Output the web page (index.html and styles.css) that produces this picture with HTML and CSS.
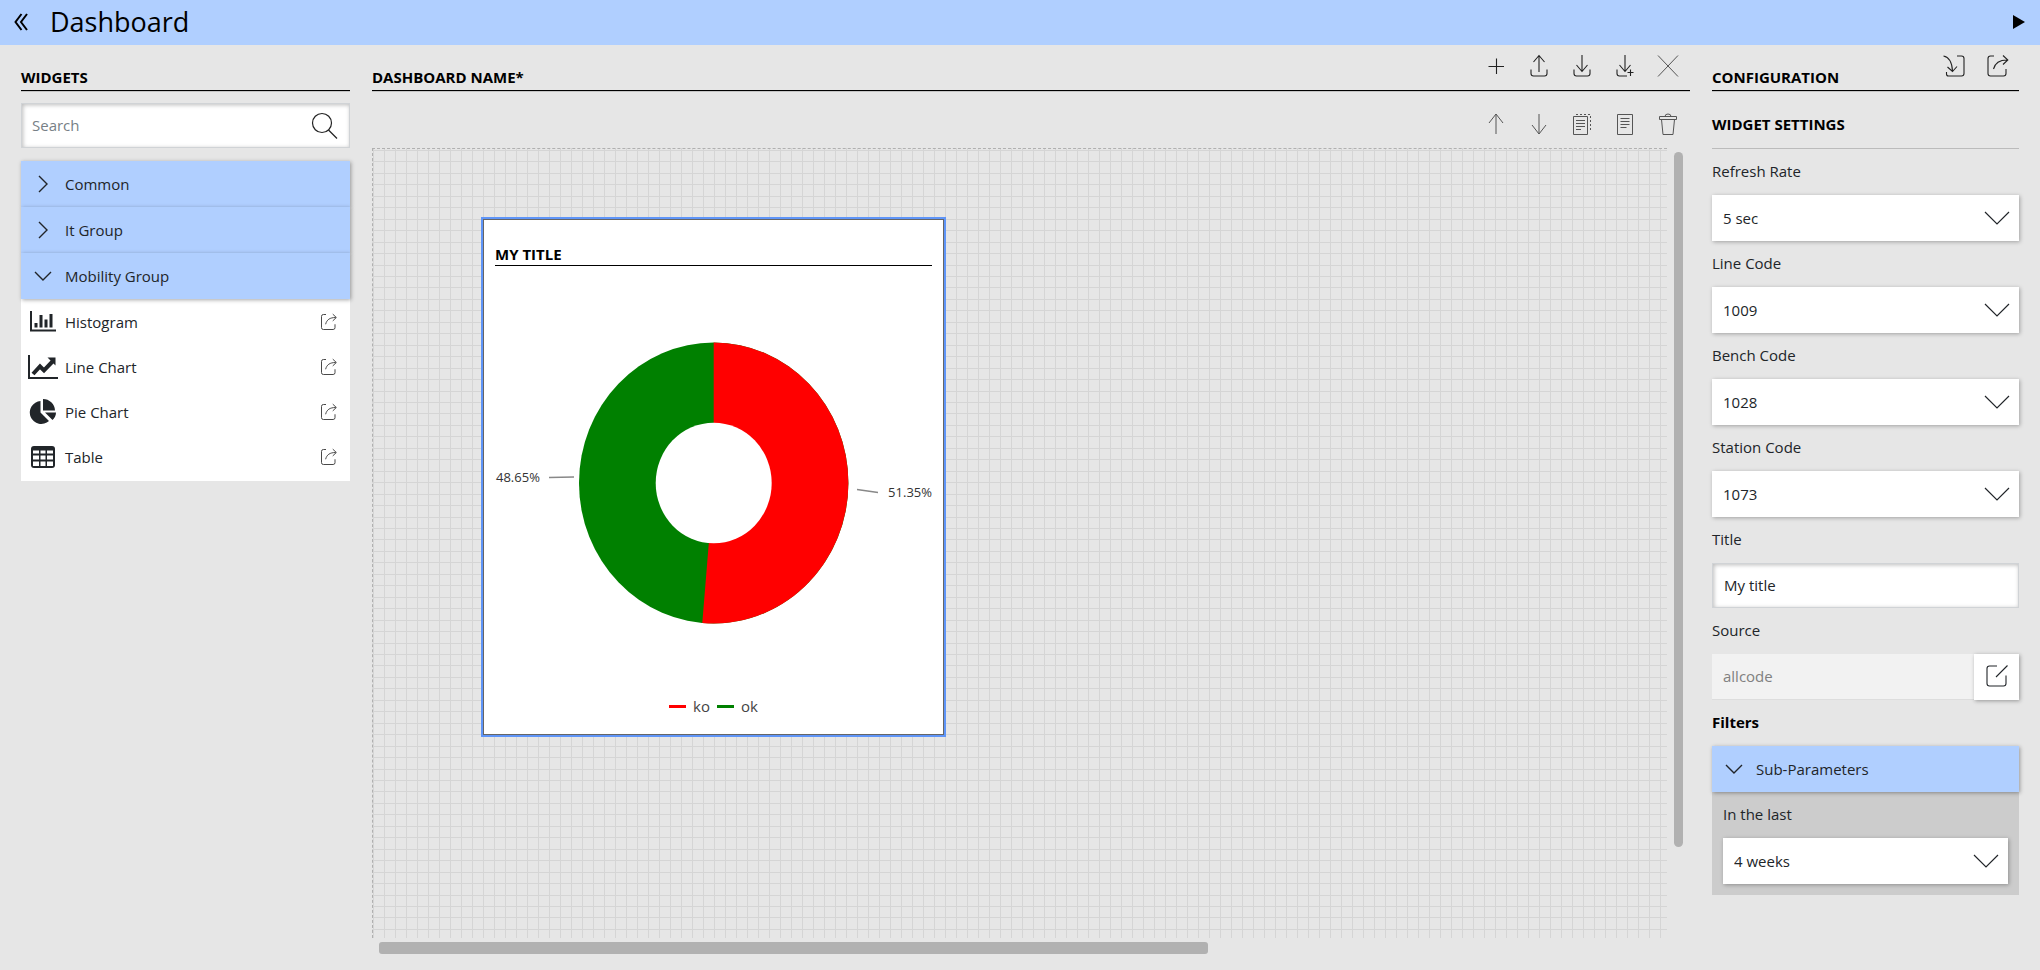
FILE: index.html
```html
<!DOCTYPE html>
<html lang="en">
<head>
<meta charset="utf-8">
<meta name="viewport" content="width=device-width, initial-scale=1">
<title>Dashboard</title>
<link rel="stylesheet" href="styles.css">
</head>
<body>
<svg class="sprite" aria-hidden="true">
  <symbol id="i-right" viewBox="0 0 30 24"><path d="M11 4l8 8-8 8"/></symbol>
  <symbol id="i-down" viewBox="0 0 30 24"><path d="M7 8l8 8 8-8"/></symbol>
  <symbol id="i-select" viewBox="0 0 26 14"><path d="M1 1l12 12L25 1"/></symbol>
  <symbol id="i-share" viewBox="0 0 24 24"><path d="M8 2H4.500Q2 2 2 4.500V19.500Q2 22 4.500 22H17.500Q20 22 20 19.500V15M7.500 15C9 9 13 6 21 6M17 1.500L21.800 6 17 10.500"/></symbol>
  <symbol id="i-import" viewBox="0 0 24 24"><path d="M15 2H19.500Q22 2 22 4.500V19.500Q22 22 19.500 22H6.500Q4.500 22 4.500 20V18M1.500 2C7 3 10 8 10.500 17M5.500 13L10.500 17.500 15 12.500"/></symbol>
  <symbol id="i-tray" viewBox="0 0 24 24"><path d="M4 15.500V19.500Q4 22 6.500 22H17.500Q20 22 20 19.500V15.500"/></symbol>
</svg>

<header class="topbar">
  <button class="plain" aria-label="Back"><svg class="icon back" viewBox="0 0 14 18"><path d="M7.500 1L1.500 9l6 8M13 1L7 9l6 8"/></svg></button>
  <h1>Dashboard</h1>
  <button class="plain play" aria-label="Run"><svg class="icon" viewBox="0 0 12 14"><path d="M0 0l12 7-12 7z"/></svg></button>
</header>

<main class="page">
  <aside class="widgets">
    <div class="head"><h2>WIDGETS</h2></div>
    <label class="search">
      <input type="search" placeholder="Search" aria-label="Search">
      <svg class="icon" viewBox="0 0 28 28"><circle cx="11" cy="11" r="9.500"/><path d="M17.500 18L26 26.500"/></svg>
    </label>
    <div class="accordion">
      <button class="group" aria-expanded="false"><svg class="lead"><use href="#i-right"/></svg>Common</button>
      <button class="group" aria-expanded="false"><svg class="lead"><use href="#i-right"/></svg>It Group</button>
      <button class="group" aria-expanded="true"><svg class="lead"><use href="#i-down"/></svg>Mobility Group</button>
    </div>
    <ul class="items">
      <li>
        <svg class="glyph" viewBox="0 0 30 26"><path class="line" d="M3 2v19.500h25"/><path d="M6.500 14h3v4.500h-3zM11.500 6h3v12.500h-3zM16.500 10.500h3v8h-3zM21.500 5h3v13.500h-3z"/></svg>
        <span>Histogram</span>
        <button class="plain" aria-label="Add Histogram"><svg class="small"><use href="#i-share"/></svg></button>
      </li>
      <li>
        <svg class="glyph" viewBox="0 0 30 26"><path class="line" d="M1 1v23h29"/><path class="trend" d="M5 20l7-7.500 4 4L25 7"/><path d="M19.500 3.500h8v8z"/></svg>
        <span>Line Chart</span>
        <button class="plain" aria-label="Add Line Chart"><svg class="small"><use href="#i-share"/></svg></button>
      </li>
      <li>
        <svg class="glyph" viewBox="0 0 30 26"><path d="M12.500 2v11.500l8.500 8.500A11.500 11.500 0 1 1 12.500 2zM15 0a12 12 0 0 1 12 11.500H15zM17 13.500h11c0 3-1.500 5.500-3.500 7.500z"/></svg>
        <span>Pie Chart</span>
        <button class="plain" aria-label="Add Pie Chart"><svg class="small"><use href="#i-share"/></svg></button>
      </li>
      <li>
        <svg class="glyph" viewBox="0 0 30 26"><rect x="3" y="2" width="24" height="22" rx="3"/><path class="hole" d="M5 6.500h6v3H5zM12.500 6.500h5v3h-5zM19 6.500h6v3h-6zM5 11.500h6v4H5zM12.500 11.500h5v4h-5zM19 11.500h6v4h-6zM5 17.500h6V22H5zM12.500 17.500h5V22h-5zM19 17.500h6V22h-6z"/></svg>
        <span>Table</span>
        <button class="plain" aria-label="Add Table"><svg class="small"><use href="#i-share"/></svg></button>
      </li>
    </ul>
  </aside>

  <section class="board">
    <div class="head">
      <h2>DASHBOARD NAME*</h2>
      <div class="tools">
        <button class="plain" aria-label="New"><svg class="icon" viewBox="0 0 24 24"><path d="M12.500 4.500v15.500M4.500 12.500H20"/></svg></button>
        <button class="plain" aria-label="Upload"><svg class="icon" viewBox="0 0 24 24"><use href="#i-tray"/><path d="M12 18V1.500M6.500 8L12 1.500 17.500 8"/></svg></button>
        <button class="plain" aria-label="Save"><svg class="icon" viewBox="0 0 24 24"><use href="#i-tray"/><path d="M12 1v16.500M6.500 11l5.500 6.500 5.500-6.500"/></svg></button>
        <button class="plain" aria-label="Save as"><svg class="icon" viewBox="0 0 24 24"><path d="M12 1v16.500M6.500 11l5.500 6.500 5.500-6.500M4 15.500V19.500Q4 22 6.500 22H14M17.500 15.500v6.500M14.500 18.500h6"/></svg></button>
        <button class="plain dim" aria-label="Close"><svg class="icon" viewBox="0 0 24 24"><path d="M2 1.500l20 21M22 1.500L2 22.500"/></svg></button>
      </div>
    </div>
    <div class="tools lower">
      <button class="plain dim" aria-label="Bring forward"><svg class="icon" viewBox="0 0 24 24"><path d="M12 22V2M5 11l7-9 7 9"/></svg></button>
      <button class="plain dim" aria-label="Send backward"><svg class="icon" viewBox="0 0 24 24"><path d="M12 2v20M5 13l7 9 7-9"/></svg></button>
      <button class="plain dim" aria-label="Copy"><svg class="icon" viewBox="0 0 24 24"><path d="M3.500 4.500h14v18h-14zM6 8.500h9M6 11.500h9M6 14.500h9M6 17.500h5"/><path class="dots" d="M6 2.500h14.500V20"/></svg></button>
      <button class="plain dim" aria-label="Paste"><svg class="icon" viewBox="0 0 24 24"><path d="M4.500 2.500h15v20h-15zM7.500 6.500h9M7.500 9.500h9M7.500 12.500h9M7.500 15.500h6"/></svg></button>
      <button class="plain dim" aria-label="Delete"><svg class="icon" viewBox="0 0 24 24"><path d="M3.500 4.500h17v3h-17zM9 4.500Q9 2 12 2t3 2.500M5.500 7.500l1.500 15h10l1.500-15"/></svg></button>
    </div>
    <div class="viewport">
      <div class="canvas">
        <article class="card">
          <h3>MY TITLE</h3>
          <svg class="chart" viewBox="0 0 437 420" role="img" aria-label="ko 51.35%, ok 48.65%">
            <ellipse cx="218.700" cy="217" rx="134.700" ry="140.500" fill="#008000"/>
            <path fill="#ff0000" d="M218.700 217V76.500A134.700 140.500 0 0 1 353.400 217A134.700 140.500 0 0 1 207.300 357z"/>
            <ellipse cx="218.700" cy="217" rx="58" ry="60.300" fill="#fff"/>
            <path class="leader" d="M54 211.500l25-.5M362 223.500l21 3"/>
            <text x="1" y="216">48.65%</text>
            <text x="437" y="231" text-anchor="end">51.35%</text>
          </svg>
          <div class="legend"><i class="key ko"></i><span>ko</span><i class="key ok"></i><span>ok</span></div>
        </article>
      </div>
      <div class="vbar"></div>
      <div class="hbar"></div>
    </div>
  </section>

  <aside class="config">
    <div class="head">
      <h2>CONFIGURATION</h2>
      <div class="tools">
        <button class="plain" aria-label="Import"><svg class="icon"><use href="#i-import"/></svg></button>
        <button class="plain" aria-label="Export"><svg class="icon"><use href="#i-share"/></svg></button>
      </div>
    </div>
    <h3 class="sub">WIDGET SETTINGS</h3>
    <label for="rate">Refresh Rate</label>
    <div class="pick"><select id="rate"><option>5 sec</option></select><svg><use href="#i-select"/></svg></div>
    <label for="line">Line Code</label>
    <div class="pick"><select id="line"><option>1009</option></select><svg><use href="#i-select"/></svg></div>
    <label for="bench">Bench Code</label>
    <div class="pick"><select id="bench"><option>1028</option></select><svg><use href="#i-select"/></svg></div>
    <label for="station">Station Code</label>
    <div class="pick"><select id="station"><option>1073</option></select><svg><use href="#i-select"/></svg></div>
    <label for="title">Title</label>
    <input id="title" class="field" type="text" value="My title">
    <label for="source">Source</label>
    <div class="source">
      <input id="source" type="text" value="allcode" disabled>
      <button aria-label="Edit source"><svg class="icon" viewBox="0 0 24 24"><path d="M12 2H4.500Q2 2 2 4.500V19.500Q2 22 4.500 22H18.500Q21 22 21 19.500V11.500M11 13L22.500 1.500"/></svg></button>
    </div>
    <h4>Filters</h4>
    <button class="group" aria-expanded="true"><svg class="lead"><use href="#i-down"/></svg>Sub-Parameters</button>
    <div class="nested">
      <label for="last">In the last</label>
      <div class="pick"><select id="last"><option>4 weeks</option></select><svg><use href="#i-select"/></svg></div>
    </div>
  </aside>
</main>
</body>
</html>
```
FILE: styles.css
```css
* { box-sizing: border-box; }

body {
  margin: 0;
  min-height: 100vh;
  display: flex;
  flex-direction: column;
  background: #e6e6e6;
  color: #212529;
  font: 15px/24px "Open Sans", "Noto Sans", sans-serif;
}

h1, h2, h3, h4, ul { margin: 0; padding: 0; }
h2, h3, h4 { font-size: 15px; line-height: 24px; font-weight: 700; color: #000; }
button, input, select { font: inherit; color: inherit; border: 0; border-radius: 0; margin: 0; }
svg { display: block; flex: none; fill: none; stroke: currentColor; }
.sprite { position: absolute; width: 0; height: 0; }
.plain { padding: 0; background: none; color: #222; }
.icon { width: 24px; height: 24px; stroke-width: 1.1; }
.dim { color: #555; }
.dim .icon { stroke-width: 1; }

/* Top bar */
.topbar {
  display: flex;
  align-items: center;
  height: 45px;
  padding: 0 15px 2px 14px;
  background: #b0cfff;
}
.topbar h1 { flex: 1; padding-left: 22px; font-size: 27px; line-height: 43px; font-weight: 400; color: #000; }
.topbar .back { width: 14px; height: 18px; stroke-width: 2; color: #000; }
.play .icon { width: 12px; height: 14px; fill: #000; stroke: none; }

/* Columns */
.page {
  flex: 1;
  display: grid;
  grid-template-columns: 329px minmax(0, 1fr) 307px;
  gap: 22px;
  padding: 0 21px 16px;
}
.head {
  display: flex;
  justify-content: space-between;
  align-items: flex-end;
  height: 46px;
  border-bottom: 1px solid #000;
  box-shadow: 0 1px #c4c4c4;
}
.head h2 { padding-bottom: 1px; }
.head .tools { align-self: flex-start; padding-top: 9px; }
.tools { display: flex; justify-content: flex-end; gap: 19px; padding-right: 10px; }

/* Widget list */
.search { display: grid; align-items: center; margin: 12px 0 13px; }
.search > * { grid-area: 1 / 1; }
.search input, .field {
  width: 100%;
  height: 45px;
  padding: 0 11px 2px;
  background: #fff;
  border: 1px solid #d0d3d6;
  box-shadow: inset 1px 1px 4px #bbb;
  outline: 0;
}
.search input { padding-left: 10px; }
.search input::placeholder { color: #777f86; opacity: 1; }
.search .icon { justify-self: end; width: 28px; height: 28px; margin-right: 11px; color: #222; stroke-width: 1.2; }
.group {
  display: flex;
  align-items: center;
  gap: 7px;
  width: 100%;
  height: 46px;
  padding: 0 7px;
  background: #b0cfff;
  text-align: left;
  box-shadow: 1px 1px 4px rgba(0, 0, 0, .35);
}
.accordion { position: relative; }
.lead { width: 30px; height: 24px; stroke-width: 1.4; }
.items {
  padding-bottom: 2px;
  list-style: none;
  background: #fff;
}
.items li { display: flex; align-items: center; gap: 7px; height: 45px; padding: 0 12px 0 7px; }
.items span { flex: 1; }
.glyph { width: 30px; height: 26px; fill: currentColor; stroke: none; }
.glyph .line { fill: none; stroke: currentColor; stroke-width: 2; }
.glyph .trend { fill: none; stroke: currentColor; stroke-width: 4; }
.glyph .hole { fill: #fff; }
.small { width: 18px; height: 18px; stroke-width: 1.3; color: #444; }

/* Board */
.board { display: flex; flex-direction: column; }
.lower { align-items: center; height: 57px; padding-top: 9px; }
.dots { stroke-dasharray: 2 2; }
.viewport {
  flex: 1;
  display: grid;
  grid-template-columns: minmax(0, 1fr) 9px;
  grid-template-rows: minmax(0, 1fr) 12px;
  gap: 4px 7px;
  padding-right: 7px;
}
.canvas {
  position: relative;
  min-height: 600px;
  border: 1px dashed #b0b0b0;
  border-width: 1px 0 0 1px;
  background-image:
    linear-gradient(to right, #d5d5d5 1px, transparent 1px),
    repeating-linear-gradient(to bottom, #d5d5d5 0 1px, transparent 1px calc(100% / 11));
  background-size: 11px 100%, 100% 126px;
  background-position: 0 0, 0 1px;
}
.vbar, .hbar { background: #b1b1b1; border-radius: 5px; }
.vbar { height: 88%; margin-top: 4px; }
.hbar { width: 64%; margin-left: 7px; border-radius: 3px; }

.card {
  position: absolute;
  left: 108px;
  top: 68px;
  width: 465px;
  padding: 24px 11px 16px;
  background: #fff;
  border: 3px solid #666;
  outline: 2px solid #5f95f8;
  outline-offset: -2px;
}
.card h3 { border-bottom: 1px solid #000; line-height: 20px; padding-bottom: 1px; }
.chart { width: 100%; stroke: none; }
.chart text { font-size: 13px; fill: #333; }
.chart .leader { stroke: #888; stroke-width: 1.7; }
.legend { display: flex; align-items: center; justify-content: center; gap: 7px; margin-top: 8px; color: #444; }
.key { width: 17px; height: 3px; }
.ko { background: #f00; }
.ok { background: #008000; }

/* Configuration */
.config { display: flex; flex-direction: column; }
.config .head .tools { gap: 20px; padding-right: 9px; }
.sub { padding: 21px 0 12px; border-bottom: 1px solid #bbb; }
.config label, .config h4 { line-height: 44px; padding-bottom: 2px; color: #212529; }
.config h4 { color: #000; }
.pick { display: grid; align-items: center; background: #fff; box-shadow: 1px 1px 4px rgba(0, 0, 0, .3); }
.pick > * { grid-area: 1 / 1; }
.pick select { appearance: none; width: 100%; height: 46px; padding: 0 40px 0 11px; background: none; outline: 0; }
.pick svg { justify-self: end; width: 26px; height: 14px; margin-right: 9px; stroke-width: 1.2; pointer-events: none; }
.source { display: flex; }
.source input { flex: 1; min-width: 0; height: 46px; padding: 0 11px 2px; background: #f2f2f2; color: #808080; border-bottom: 1px solid #ddd; }
.source button { display: grid; place-items: center; width: 45px; padding: 0 0 2px; background: #fff; box-shadow: 1px 1px 4px rgba(0, 0, 0, .35); }
.config .group { position: relative; }
.nested { padding: 0 11px 11px; background: #ccc; }
.nested label { display: block; }
```
